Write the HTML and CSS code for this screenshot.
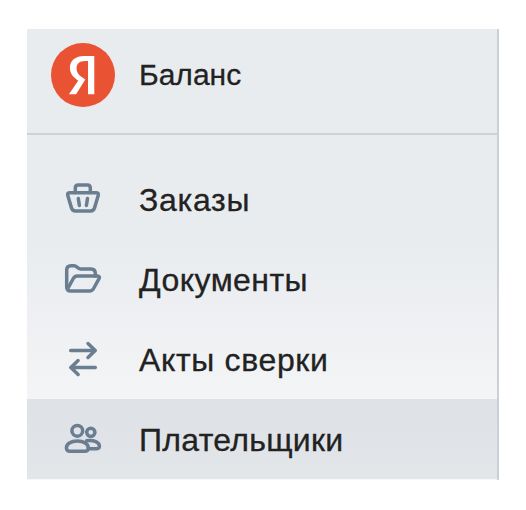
FILE: index.html
```html
<!DOCTYPE html>
<html lang="ru">
<head>
  <meta charset="UTF-8">
  <meta name="viewport" content="width=device-width, initial-scale=1.0">
  <title>Баланс</title>
  <link rel="stylesheet" href="styles.css">
</head>
<body>
  <aside class="sidebar">
    <header class="brand">
      <svg class="logo" viewBox="0 0 64 64">
        <circle cx="32" cy="32" r="32" fill="#e95233"/>
        <path fill="#fff" d="M43.3 51.2H37V18.1h-3c-5.5 0-8.400 2.800-8.400 7 0 4.700 2 6.900 6.200 9.700l2.500 1.700L25.100 51.200h-7.200l9.300-13.500c-5.300-3.800-8.300-7.300-8.300-12.900 0-7.100 5-11.900 14.700-11.900h9.700z"/>
      </svg>
      <span class="brand-name">Баланс</span>
    </header>

    <nav class="menu">
      <a class="item">
        <svg class="icon" viewBox="0 0 40 40">
          <path d="M12.300 13.500V9q0-3 3-3h9q3 0 3 3v4.500"/>
          <path d="M7 13.700h26q3 0 2.200 2.800l-3.700 12.500q-.9 3-4 3h-15q-3.100 0-4-3L4.800 16.500Q4 13.700 7 13.700z"/>
          <path d="M15.300 19.600l1.100 7M24.500 19.600l-1.100 7"/>
        </svg>
        <span class="label orders">Заказы</span>
      </a>
      <a class="item">
        <svg class="icon" viewBox="0 0 40 40">
          <path d="M3.700 28V11q0-4.300 4.300-4.300h3c3 0 3.300 3.300 6.300 3.300H28q4.300 0 4.300 4.300V17"/>
          <path d="M4.300 30.500L10.300 19.500q1.400-2.500 4-2.500H34.300q3.200 0 1.600 2.900l-5.300 9.600Q29.200 32 26.500 32H7.500Q3.700 32 3.700 28"/>
        </svg>
        <span class="label documents">Документы</span>
      </a>
      <a class="item">
        <svg class="icon" viewBox="0 0 40 40">
          <path d="M7.700 11.500h24.600M25 4.500l7.200 7-7.200 7"/>
          <path d="M32.300 28.500H7.700M15.100 21.500l-7.200 7 7.200 7"/>
        </svg>
        <span class="label acts">Акты сверки</span>
      </a>
      <a class="item active">
        <svg class="icon" viewBox="0 0 40 40">
          <circle cx="14.300" cy="11.800" r="5.400"/>
          <circle cx="27.800" cy="13.300" r="4.100"/>
          <path d="M14.300 21.900c6.500 0 11 3.300 11 7 0 2.300-1.400 3.300-3.600 3.300H7c-2.200 0-3.600-1-3.600-3.300 0-3.700 4.400-7 10.900-7z"/>
          <path d="M23.500 21.800c7.500-1.200 12.900 1.700 12.900 5.300 0 1.900-1 2.600-2.700 2.600h-8.200"/>
        </svg>
        <span class="label payers">Плательщики</span>
      </a>
    </nav>
  </aside>
</body>
</html>
```

FILE: styles.css
```css
body {
  margin: 0;
  padding: 29px 27px;
  background: #fff;
  color: #222;
  font-family: "Liberation Sans", Arial, sans-serif;
}

.sidebar {
  box-sizing: border-box;
  width: 472px;
  height: 451px;
  border-right: 2px solid #cbd0d4;
  background: linear-gradient(#e8ecef 0%, #e8ecef 45%, #edeff2 62%, #f4f5f6 84%, #f7f7f8 100%);
}

/* logo + product name */
.brand {
  display: flex;
  align-items: center;
  gap: 24px;
  box-sizing: border-box;
  height: 106px;
  padding: 0 24px 12px;
  border-bottom: 2px solid #cdd2d6;
}
.logo { width: 64px; height: 64px; }
.brand-name { font-size: 30px; -webkit-text-stroke: 0.3px #222; }

/* navigation */
.menu { padding-top: 24px; }
.item {
  display: flex;
  align-items: center;
  gap: 36px;
  height: 80px;
  padding-left: 36px;
  font-size: 32px;
}
.label { padding-top: 2px; -webkit-text-stroke: 0.3px #222; }
.orders { letter-spacing: 0.7px; }
.documents { letter-spacing: 0.45px; }
.acts { letter-spacing: 0.65px; }
.payers { letter-spacing: 0.3px; }
.active { background: linear-gradient(#dee1e6, #e2e6e9); }

.icon {
  width: 40px;
  height: 40px;
  fill: none;
  stroke: #6b7d90;
  stroke-width: 3.5;
  stroke-linecap: round;
  stroke-linejoin: round;
}
```
